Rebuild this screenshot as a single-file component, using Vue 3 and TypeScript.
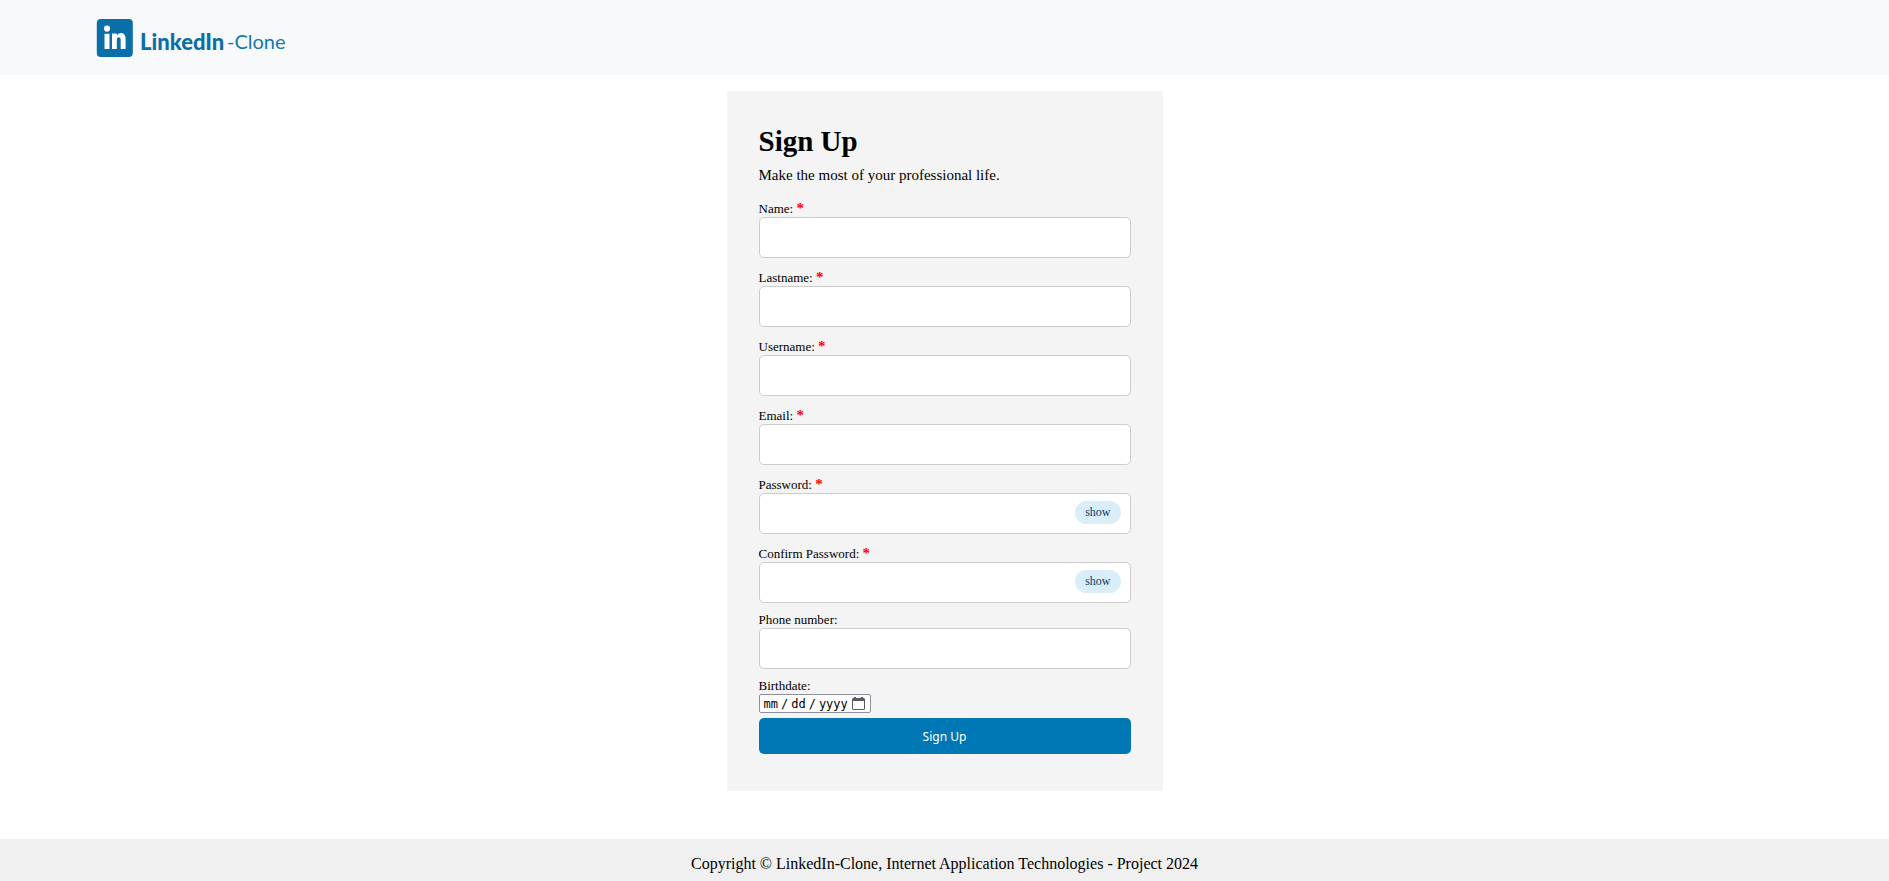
<script setup lang="ts">
import { reactive } from 'vue'

interface Field {
  id: string
  label: string
  kind: 'text' | 'email' | 'password' | 'tel'
  required: boolean
}

const fields: Field[] = [
  { id: 'name', label: 'Name:', kind: 'text', required: true },
  { id: 'lastname', label: 'Lastname:', kind: 'text', required: true },
  { id: 'username', label: 'Username:', kind: 'text', required: true },
  { id: 'email', label: 'Email:', kind: 'email', required: true },
  { id: 'password', label: 'Password:', kind: 'password', required: true },
  { id: 'confirm', label: 'Confirm Password:', kind: 'password', required: true },
  { id: 'phone', label: 'Phone number:', kind: 'tel', required: false },
]

const values = reactive<Record<string, string>>({})
const visible = reactive<Record<string, boolean>>({})

function inputType(field: Field): string {
  return field.kind === 'password' && visible[field.id] ? 'text' : field.kind
}
</script>

<template>
  <div class="page">
    <header class="topbar">
      <a class="brand" href="#" aria-label="LinkedIn-Clone">
        <svg class="logo" width="192" height="40" viewBox="0 0 192 40">
          <rect x="0.8" y="1" width="36" height="38" rx="4" fill="#0a6fa8" />
          <circle cx="11" cy="10.6" r="3.1" fill="#fff" />
          <path d="M8.500 15.800h5V31h-5z" fill="#fff" />
          <path
            d="M16 15.500h4.800v2.200c1-1.700 2.400-2.600 4.200-2.600 3.300 0 4.600 2.300 4.600 6.200V31h-4.900v-8.600c0-2-.6-3.100-1.900-3.100-1.400 0-2 1.100-2 3.100V31H16z"
            fill="#fff"
          />
          <text class="word strong" x="44" y="32">LinkedIn</text>
          <text class="word" x="131" y="31">-Clone</text>
        </svg>
      </a>
    </header>

    <main class="content">
      <form class="card" @submit.prevent>
        <h1 class="title">Sign Up</h1>
        <p class="lead">Make the most of your professional life.</p>

        <div v-for="field in fields" :key="field.id" class="field" :class="{ required: field.required }">
          <label class="label" :for="field.id">{{ field.label }} <span v-if="field.required" class="star">*</span></label>
          <div class="control">
            <input :id="field.id" v-model="values[field.id]" class="box" :type="inputType(field)" />
            <button
              v-if="field.kind === 'password'"
              class="show"
              type="button"
              @click="visible[field.id] = !visible[field.id]"
            >{{ visible[field.id] ? 'hide' : 'show' }}</button>
          </div>
        </div>

        <div class="field birthdate">
          <label class="label" for="birthdate">Birthdate:</label>
          <div class="date">
            <input id="birthdate" v-model="values.birthdate" class="date-input" type="date" />
            <svg class="calendar" width="13" height="13" viewBox="0 0 13 13">
              <path d="M2 0h2v1h5V0h2v1h1l1 1v10l-1 1H1l-1-1V2l1-1h1z" fill="#5b5b5b" />
              <path d="M1 4h11v8H1z" fill="#fff" />
            </svg>
          </div>
        </div>

        <button class="submit" type="submit">Sign Up</button>
      </form>
    </main>

    <footer class="footer">Copyright © LinkedIn-Clone, Internet Application Technologies - Project 2024</footer>
  </div>
</template>

<style>
body {
  margin: 0;
  background: #fff;
}
</style>

<style scoped>
.page {
  display: flex;
  flex-direction: column;
  min-height: 100vh;
  box-sizing: border-box;
  color: #000;
  font-family: "Liberation Serif", "Times New Roman", serif;
  font-size: 16px;
}
.topbar {
  display: flex;
  align-items: center;
  box-sizing: border-box;
  height: 75px;
  padding: 0 96px;
  background: #f8f9fb;
}
.brand,
.logo {
  display: block;
}
.word {
  fill: #1279ab;
  font-family: Lato, "Open Sans", sans-serif;
  font-size: 20px;
}
.strong {
  fill: #0a6fa8;
  font-size: 22px;
  font-weight: 900;
}
.content {
  display: flex;
  align-items: flex-start;
  justify-content: center;
  flex: 1;
  padding: 16px 16px 48px;
}
.card {
  box-sizing: border-box;
  width: 100%;
  max-width: 436px;
  padding: 32px 32px 37px;
  background: #f4f4f4;
}
.title {
  margin: 0;
  font-size: 29px;
  line-height: 36px;
}
.lead {
  margin: 5px 0 11px;
  font-size: 15px;
  line-height: 22px;
}
.field {
  margin-bottom: 8px;
}
.birthdate {
  margin-bottom: 5px;
}
.label {
  display: block;
  font-size: 13px;
  line-height: 17px;
}
.required .label {
  padding-top: 3px;
}
.star {
  color: #f00;
  font-size: 15px;
  font-weight: bold;
  line-height: 0;
}
.control {
  position: relative;
}
.box {
  display: block;
  box-sizing: border-box;
  width: 100%;
  height: 41px;
  padding: 0 12px;
  border: 1px solid #ccc;
  border-radius: 5px;
  background: #fff;
  font: inherit;
}
.show {
  position: absolute;
  top: 8px;
  right: 10px;
  height: 23px;
  padding: 0 10px;
  border: 0;
  border-radius: 12px;
  background: #daeef9;
  color: #003f6b;
  font-family: inherit;
  font-size: 12px;
}
.date {
  display: flex;
  align-items: center;
  box-sizing: border-box;
  width: fit-content;
  height: 19px;
  padding: 0 5px 0 4px;
  border: 1px solid #8f8f9d;
  border-radius: 2px;
  background: #fff;
}
.date-input {
  width: 88px;
  height: 17px;
  padding: 0;
  border: 0;
  outline: 0;
  background: transparent;
  color: #000;
  font-family: "DejaVu Sans Mono", monospace;
  font-size: 12px;
}
.date-input::-webkit-calendar-picker-indicator {
  display: none;
}
.date-input::-webkit-datetime-edit-fields-wrapper,
.date-input::-webkit-datetime-edit {
  padding: 0;
}
.date-input::-webkit-datetime-edit-text {
  padding: 0 3px;
}
.date-input::-webkit-datetime-edit-month-field,
.date-input::-webkit-datetime-edit-day-field,
.date-input::-webkit-datetime-edit-year-field {
  padding: 0;
}
.submit {
  display: block;
  width: 100%;
  height: 36px;
  padding: 0;
  border: 0;
  border-radius: 5px;
  background: #0077b5;
  color: #fff;
  font-family: "Noto Sans", sans-serif;
  font-size: 12px;
}
.footer {
  box-sizing: border-box;
  padding: 16px 16px 8px;
  background: #f0f0f0;
  line-height: 18px;
  text-align: center;
}
</style>
